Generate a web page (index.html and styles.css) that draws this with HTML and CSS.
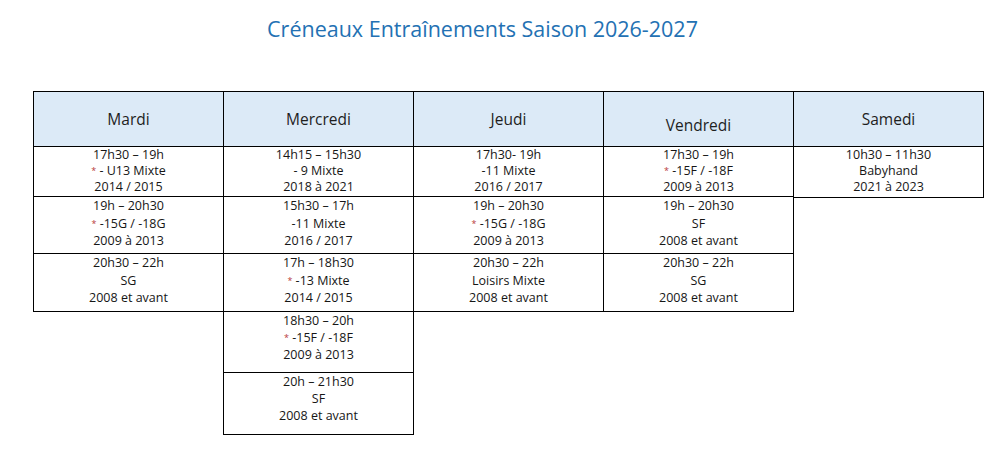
FILE: index.html
```html
<!DOCTYPE html>
<html lang="fr">
<head>
<meta charset="utf-8">
<title>Créneaux Entraînements Saison 2026-2027</title>
<link rel="stylesheet" href="styles.css">
</head>
<body>
<h1 class="title">Créneaux Entraînements Saison 2026-2027</h1>
<div class="planning">
  <div class="col">
    <div class="head">Mardi</div>
    <div class="cell r1">17h30 – 19h<br><span class="star">*</span> - U13 Mixte<br>2014 / 2015</div>
    <div class="cell r2">19h – 20h30<br><span class="star">*</span> -15G / -18G<br>2009 à 2013</div>
    <div class="cell r3">20h30 – 22h<br>SG<br>2008 et avant</div>
  </div>
  <div class="col">
    <div class="head">Mercredi</div>
    <div class="cell r1">14h15 – 15h30<br>- 9 Mixte<br>2018 à 2021</div>
    <div class="cell r2">15h30 – 17h<br>-11 Mixte<br>2016 / 2017</div>
    <div class="cell r3">17h – 18h30<br><span class="star">*</span> -13 Mixte<br>2014 / 2015</div>
    <div class="cell r4">18h30 – 20h<br><span class="star">*</span> -15F / -18F<br>2009 à 2013</div>
    <div class="cell r5">20h – 21h30<br>SF<br>2008 et avant</div>
  </div>
  <div class="col">
    <div class="head">Jeudi</div>
    <div class="cell r1">17h30- 19h<br>-11 Mixte<br>2016 / 2017</div>
    <div class="cell r2">19h – 20h30<br><span class="star">*</span> -15G / -18G<br>2009 à 2013</div>
    <div class="cell r3">20h30 – 22h<br>Loisirs Mixte<br>2008 et avant</div>
  </div>
  <div class="col">
    <div class="head head-low">Vendredi</div>
    <div class="cell r1">17h30 – 19h<br><span class="star">*</span> -15F / -18F<br>2009 à 2013</div>
    <div class="cell r2">19h – 20h30<br>SF<br>2008 et avant</div>
    <div class="cell r3">20h30 – 22h<br>SG<br>2008 et avant</div>
  </div>
  <div class="col">
    <div class="head">Samedi</div>
    <div class="cell r1 r1-tall">10h30 – 11h30<br>Babyhand<br>2021 à 2023</div>
  </div>
</div>
</body>
</html>
```

FILE: styles.css
```css
html, body {
  margin: 0;
  padding: 0;
  background: #ffffff;
}

body {
  font-family: "Open Sans", "Liberation Sans", sans-serif;
  color: #111111;
}

.title {
  margin: 0;
  padding-top: 14px;
  padding-right: 35px;
  height: 91px;
  box-sizing: border-box;
  text-align: center;
  font-size: 21.5px;
  line-height: 30px;
  font-weight: 400;
  color: #2371b3;
}

.planning {
  display: flex;
  align-items: flex-start;
  padding-left: 33px;
}

.col {
  display: flex;
  flex-direction: column;
  width: 191px;
  margin-left: -1px;
}

.col:first-child {
  margin-left: 0;
}

.head,
.cell {
  box-sizing: border-box;
  border: 1px solid #000;
  text-align: center;
}

.cell {
  margin-top: -1px;
  font-size: 12.5px;
  color: #161616;
}

.head {
  height: 56px;
  background: #dceaf7;
  display: flex;
  align-items: center;
  justify-content: center;
  font-size: 15.5px;
  color: #1e1e1e;
}

.head-low {
  padding-top: 12px;
}

.r1 { height: 51px; line-height: 16px; }
.r1-tall { height: 52px; }
.r2 { height: 58px; line-height: 17.5px; }
.r3 { height: 59px; line-height: 17.5px; }
.r4 { height: 62px; line-height: 17px; }
.r5 { height: 63px; line-height: 17px; }

.star {
  color: #b83a3a;
  font-size: 9px;
  vertical-align: 1px;
}
```
